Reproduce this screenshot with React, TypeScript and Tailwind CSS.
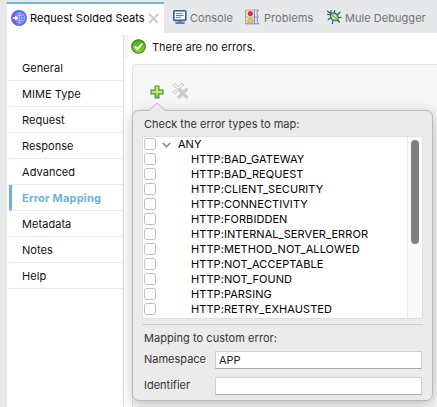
import React from "react";

const menu = ["General", "MIME Type", "Request", "Response", "Advanced", "Error Mapping", "Metadata", "Notes", "Help"];

const errors = [
  "BAD_GATEWAY",
  "BAD_REQUEST",
  "CLIENT_SECURITY",
  "CONNECTIVITY",
  "FORBIDDEN",
  "INTERNAL_SERVER_ERROR",
  "METHOD_NOT_ALLOWED",
  "NOT_ACCEPTABLE",
  "NOT_FOUND",
  "PARSING",
  "RETRY_EXHAUSTED",
];

function GlobeIcon() {
  return (
    <svg width="16" height="16" viewBox="0 0 16 16" fill="none">
      <circle cx="8" cy="8" r="8" fill="#5d68f4" />
      <g stroke="#b9c0ff" strokeWidth="0.8">
        <path d="M5 4.2A5.2 5.2 0 1 1 5 11.8M8.5 2.8v10.4M5.8 5.6h6.8M7 8h6.2M5.8 10.4h6.8" />
        <path d="M8.5 2.8c-3 2.8-3 7.6 0 10.4M8.5 2.8c3 2.8 3 7.6 0 10.4" />
      </g>
      <path d="M1.8 8h4M4.3 6 6.3 8l-2 2" stroke="#fff" strokeWidth="1.4" />
    </svg>
  );
}

function ConsoleIcon() {
  return (
    <svg width="14" height="14" viewBox="0 0 14 14" fill="none">
      <rect x="0.8" y="0.8" width="12" height="9.6" rx="1" fill="#f3f8ff" stroke="#2d5d9f" strokeWidth="1.6" />
      <path d="M3 3.6h6.2M3 5.5h7.5M3 7.4h5" stroke="#5f759b" strokeWidth="0.9" />
      <path d="M5 11h4v1.2H5z" fill="#7292bd" />
      <path d="M2.4 13h9.2" stroke="#2d5d9f" strokeWidth="1.5" />
    </svg>
  );
}

function ProblemsIcon() {
  return (
    <svg width="15" height="16" viewBox="0 0 15 16" fill="none">
      <path d="M.6 1h12.8c-1.8 2.2-1.8 4.4-.2 6.8-1.6 2.3-1.4 4.7.6 7H.6z" fill="#dce9f8" />
      <path d="M.6 15V1" stroke="#aaa06f" />
      <path d="M.6 1h8.6M.6 8h8.6" stroke="#a99b79" strokeWidth="0.8" />
      <path d="M.6 14.8h13.6M9.4 1v13.8M9.4 1h4c-1.8 2.2-1.8 4.4-.2 6.8-1.6 2.3-1.4 4.7.6 7M9.4 8H13" stroke="#718fc0" />
      <circle cx="5.3" cy="4.5" r="2.6" fill="#e32e36" />
      <path d="M2.8 13.3v-1.4a2.5 2.5 0 0 1 5 0v1.4z" fill="#ffc34f" stroke="#ea8e25" strokeWidth="0.8" />
    </svg>
  );
}

function BugIcon() {
  return (
    <svg width="16" height="16" viewBox="0 0 16 16" fill="none">
      <path d="M4.5 5.8 1 5.2M5 8.5 1.8 11M7 11.2 6.3 15M8.2 4.6 8.8 1M11 6l3.3-3M12 8.5h3.6M11.4 11l2.4 2.5M4.8 4.5 1.2 2M5 4.5V1" stroke="#24545c" strokeWidth="1.1" />
      <ellipse cx="8.3" cy="7.8" rx="4.5" ry="3.4" transform="rotate(42 8.3 7.8)" fill="#9ed57d" stroke="#246069" strokeWidth="1.1" />
      <path d="m6 5.5 5 5" stroke="#3e8a73" strokeWidth="0.8" />
      <path d="m6.4 8 2 2.1M8.2 6l1.8 1.5" stroke="#e2f7cc" strokeWidth="1.3" />
    </svg>
  );
}

function OkIcon() {
  return (
    <svg width="15" height="15" viewBox="0 0 15 15" fill="none">
      <defs>
        <linearGradient id="ok" x2="0" y2="1">
          <stop stopColor="#50a02a" />
          <stop offset="1" stopColor="#87db22" />
        </linearGradient>
      </defs>
      <circle cx="7.5" cy="7.5" r="6.8" fill="url(#ok)" stroke="#348026" strokeWidth="1.1" />
      <path d="m3.8 7.4 2.6 2.8 4.8-5.5" stroke="#fff" strokeWidth="2" />
    </svg>
  );
}

function PlusIcon() {
  return (
    <svg width="14" height="14" viewBox="0 0 14 14">
      <defs>
        <linearGradient id="plus" x2="0" y2="1">
          <stop stopColor="#d7e86b" />
          <stop offset=".55" stopColor="#d2e45a" />
          <stop offset="1" stopColor="#65b64d" />
        </linearGradient>
      </defs>
      <path d="M5.2 1h3.6v4.2H13v3.6H8.8V13H5.2V8.8H1V5.2h4.2z" fill="url(#plus)" stroke="#429447" strokeWidth="1.2" />
    </svg>
  );
}

function ClearIcon() {
  return (
    <svg width="16" height="17" viewBox="0 0 16 17" fill="none" strokeLinecap="square">
      <path d="m2 2 7 7M9 2 2 9" stroke="#c5c5c5" strokeWidth="3.1" />
      <path d="m2 2 7 7M9 2 2 9" stroke="#f7f7f7" strokeWidth="1.6" />
      <path d="m6.2 6.8 7 7M13.2 6.8l-7 7" stroke="#cbcbcb" strokeWidth="3.4" />
    </svg>
  );
}

function Check() {
  return <span className="-mt-px h-3 w-3 shrink-0 rounded-[2.5px] border border-[#bdbdbd] bg-white" />;
}

function Field({ label, value }: { label: string; value: string }) {
  return (
    <div className="flex h-[18px] items-center">
      <span className="-mt-0.5 w-[73px] pl-0.5">{label}</span>
      <div className="flex h-[18px] w-[207px] items-center border border-[#d0d0d0] border-b-[#aaa] bg-white pl-[3px] text-[#222]">{value}</div>
    </div>
  );
}

export default function App() {
  return (
    <div className="relative flex h-[407px] w-[437px] flex-col overflow-hidden bg-[#e7e8ea] font-['Inter',sans-serif] text-[11px] leading-[15px] text-[#111]">
      <header className="flex h-[33px] shrink-0 pl-[7px]">
        <div className="mt-0.5 flex w-[157px] items-center border-t-2 border-[#67b5dc] bg-white pb-0.5 pl-1">
          <GlobeIcon />
          <span className="ml-[3px] w-[115px] whitespace-nowrap pt-px tracking-[0.04px] text-black">Request Solded Seats</span>
          <svg className="ml-[3px] mt-0.5" width="11" height="11" viewBox="0 0 11 11" fill="none"><path d="m1 1 9 9M10 1 1 10" stroke="#c9c9c9" strokeWidth="1.8" /></svg>
        </div>
        <div className="flex items-center pt-[3px] text-[#707276]">
          <span className="-mt-[3px] ml-[9px]"><ConsoleIcon /></span>
          <span className="ml-[3px] w-[44px] tracking-[0.04px]">Console</span>
          <span className="-mt-[2px] ml-[11px]"><ProblemsIcon /></span>
          <span className="ml-[4px] w-[50px] tracking-[0.06px]">Problems</span>
          <span className="-mt-[3px] ml-[12px]"><BugIcon /></span>
          <span className="ml-[3px] whitespace-nowrap tracking-[0.04px]">Mule Debugger</span>
        </div>
      </header>

      <div className="ml-[7px] flex flex-1 bg-white">
        <nav className="flex w-[116px] flex-col pl-0.5 pt-[22px]">
          {menu.map((m) => (
            <div
              key={m}
              className={
                m === "Error Mapping"
                  ? "flex h-[26px] w-[114px] items-center border-b border-l-[3px] border-b-[#ececec] border-l-[#68b4da] pl-[10px] pt-0.5 font-bold tracking-[0.2px] text-[#68b4da]"
                  : "flex h-[26px] w-[114px] items-center border-b border-[#ececec] pl-[13px] pt-0.5 tracking-[0.05px]"
              }
            >
              {m}
            </div>
          ))}
        </nav>
        <main className="mt-0.5 flex flex-1 flex-col border-l border-[#dedede]">
          <div className="flex h-[29px] items-start">
            <div className="h-[22px] w-1 bg-[#f5f5f5]" />
            <div className="ml-[3px] mt-[3.5px]"><OkIcon /></div>
            <span className="ml-[6px] mt-[5px]">There are no errors.</span>
          </div>
          <div className="ml-2 flex flex-1 items-start rounded-tl-[4px] border-l border-t border-[#e4e4e4] bg-[#f6f6f6] pl-[17px]">
            <div className="mt-5"><PlusIcon /></div>
            <div className="ml-[9px] mt-[18px]"><ClearIcon /></div>
          </div>
        </main>
      </div>

      <section className="absolute left-[132px] top-[110px] h-[291px] w-[301px] rounded-[7px] border border-[#b8b8b8] bg-[#ebebeb] px-[9px] text-[#333] shadow-[0_3px_13px_rgba(0,0,0,0.24)]">
        <svg className="absolute left-[15px] top-[-9px]" width="18" height="10" viewBox="0 0 18 10">
          <path d="M0 9h1L9 1l8 8h1v1H0z" fill="#ebebeb" />
          <path d="M0 8.5h1L9 .8l8 7.7h1" fill="none" stroke="#b8b8b8" />
        </svg>
        <h2 className="h-[25px] pl-0.5 pt-[6px]">Check the error types to map:</h2>
        <div className="flex h-[183px] w-[281px] overflow-hidden border border-[#dfdfdf] bg-white text-black">
          <div className="flex w-[264px] flex-col pl-px">
            <div className="flex h-[15px] items-center">
              <Check />
              <svg className="ml-[6px]" width="9" height="6" viewBox="0 0 9 6" fill="none"><path d="m.8 1 3.7 3.7L8.2 1" stroke="#808080" strokeWidth="1.5" /></svg>
              <span className="ml-[7px]">ANY</span>
            </div>
            {errors.map((e) => (
              <div key={e} className="flex h-[15px] shrink-0 items-center">
                <Check />
                <span className="ml-[35px] tracking-[0.07px]">HTTP:{e}</span>
              </div>
            ))}
          </div>
          <div className="flex flex-1 justify-center border-l border-[#e8e8e8] bg-[#fafafa] pt-[3px]">
            <div className="h-[104px] w-2 rounded-full bg-[#7f7f7f]" />
          </div>
        </div>
        <div className="mt-[5px] w-[281px] border-t border-[#cdcdcd]" />
        <h2 className="mb-[5px] mt-[6px] pl-0.5 tracking-[0.05px]">Mapping to custom error:</h2>
        <Field label="Namespace" value="APP" />
        <div className="h-2" />
        <Field label="Identifier" value="" />
      </section>
    </div>
  );
}
